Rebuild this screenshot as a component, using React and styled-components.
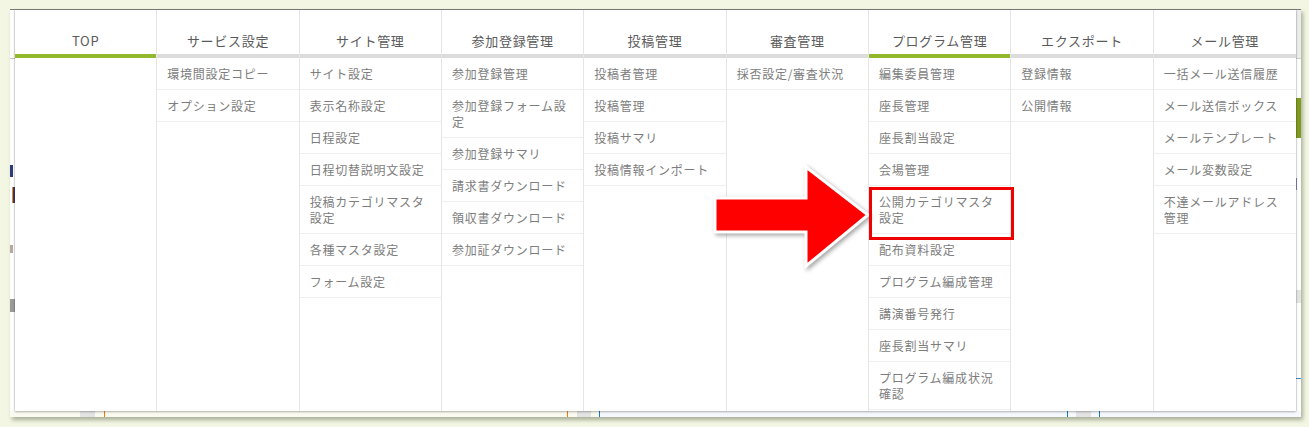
import React from "react";
import styled, { createGlobalStyle } from "styled-components";

const GlobalStyle = createGlobalStyle`
  html, body {
    margin: 0;
    padding: 0;
    background: #f2f6e3;
  }
  body {
    font-family: "Noto Sans CJK JP", "Noto Sans", sans-serif;
  }
`;

const menus = [
  { title: "TOP", active: true, items: [] },
  { title: "サービス設定", items: ["環境間設定コピー", "オプション設定"] },
  {
    title: "サイト管理",
    items: [
      "サイト設定",
      "表示名称設定",
      "日程設定",
      "日程切替説明文設定",
      "投稿カテゴリマスタ設定",
      "各種マスタ設定",
      "フォーム設定",
    ],
  },
  {
    title: "参加登録管理",
    items: [
      "参加登録管理",
      "参加登録フォーム設定",
      "参加登録サマリ",
      "請求書ダウンロード",
      "領収書ダウンロード",
      "参加証ダウンロード",
    ],
  },
  {
    title: "投稿管理",
    items: ["投稿者管理", "投稿管理", "投稿サマリ", "投稿情報インポート"],
  },
  { title: "審査管理", items: ["採否設定/審査状況"] },
  {
    title: "プログラム管理",
    active: true,
    items: [
      "編集委員管理",
      "座長管理",
      "座長割当設定",
      "会場管理",
      "公開カテゴリマスタ設定",
      "配布資料設定",
      "プログラム編成管理",
      "講演番号発行",
      "座長割当サマリ",
      "プログラム編成状況確認",
    ],
  },
  { title: "エクスポート", items: ["登録情報", "公開情報"] },
  {
    title: "メール管理",
    items: [
      "一括メール送信履歴",
      "メール送信ボックス",
      "メールテンプレート",
      "メール変数設定",
      "不達メールアドレス管理",
    ],
  },
];

const Page = styled.div`
  position: relative;
  width: 1309px;
  height: 427px;
  box-sizing: border-box;
  padding: 9px 0 0 10px;
  overflow: hidden;
`;

// the screenshot of the page behind the open menu
const Frame = styled.div`
  width: 1291px;
  height: 408px;
  box-sizing: border-box;
  border-top: 1px solid #7c7c7c;
  background: #fbfbf6;
  box-shadow: 2px 3px 4px rgba(60, 70, 40, 0.4);
  display: grid;
  grid-template-columns: 5px 1281px 1fr;
  grid-template-rows: 401px 1fr;
`;

const Gutter = styled.div`
  display: flex;
  flex-direction: column;
  align-items: ${(p) => (p.$side === "left" ? "flex-start" : "stretch")};
  background: #ffffff;
  overflow: hidden;
`;

const Mark = styled.span`
  display: block;
  flex: none;
  margin-top: ${(p) => p.$top}px;
  margin-left: ${(p) => p.$left || 0}px;
  width: ${(p) => (p.$w ? `${p.$w}px` : "auto")};
  height: ${(p) => p.$h}px;
  background: ${(p) => p.$color};
  border-left: ${(p) => (p.$edge ? `1px solid ${p.$edge}` : "none")};
`;

const BottomStrip = styled.div`
  grid-column: 1 / -1;
  display: flex;
  align-items: stretch;
  background: linear-gradient(to right, #fbfaf0 0 590px, #f5f8fc 590px);
`;

const Tick = styled.span`
  flex: none;
  margin-left: ${(p) => p.$gap}px;
  width: ${(p) => p.$w}px;
  background: ${(p) => p.$color};
`;

const Panel = styled.nav`
  background: #ffffff;
  box-shadow: 0 1px 2px rgba(0, 0, 0, 0.28), 1px 0 1px rgba(0, 0, 0, 0.08),
    -1px 0 1px rgba(0, 0, 0, 0.08);
  display: grid;
  grid-template-columns: repeat(9, 1fr);
  position: relative;
  z-index: 1;
`;

const Column = styled.div`
  display: flex;
  flex-direction: column;
  min-width: 0;
  border-right: 1px solid #e6e6e6;

  &:last-child {
    border-right: none;
  }
`;

const Header = styled.div`
  height: 48px;
  box-sizing: border-box;
  display: flex;
  align-items: flex-end;
  justify-content: center;
  padding-bottom: 4px;
  font-size: 13px;
  line-height: 18px;
  letter-spacing: 0.7px;
  color: #5a5a5a;
  border-bottom: 4px solid ${(p) => (p.$active ? "#92b82b" : "#dcdcdc")};
`;

const ItemList = styled.ul`
  list-style: none;
  margin: 0;
  padding: 0;
`;

const Item = styled.li`
  padding: 8px 8px 7px 10px;
  font-size: 12px;
  line-height: 16px;
  letter-spacing: 0.75px;
  color: #7d7d7d;
  border-bottom: 1px solid #efefef;
  word-break: break-all;
`;

const ArrowWrap = styled.svg`
  position: absolute;
  left: 700px;
  top: 155px;
  width: 185px;
  height: 125px;
  overflow: visible;
  filter: drop-shadow(2px 2px 2px rgba(0, 0, 0, 0.35));
  z-index: 2;
`;

const Highlight = styled.div`
  position: absolute;
  left: 869px;
  top: 187px;
  width: 145px;
  height: 53px;
  box-sizing: border-box;
  border: 3px solid #f00000;
  z-index: 2;
`;

const Arrow = () => (
  <ArrowWrap viewBox="0 0 185 125">
    <polygon
      points="15,43 106,43 106,12 168,60 106,111 106,77 15,77"
      fill="#ff0000"
      stroke="#ffffff"
      strokeWidth="3"
      strokeLinejoin="miter"
    />
  </ArrowWrap>
);

export default function App() {
  return (
    <>
      <GlobalStyle />
      <Page>
        <Frame>
          <Gutter $side="left">
            <Mark $top={48} $w={5} $h={1} $color="#c9c9c9" />
            <Mark $top={106} $w={3} $h={12} $color="#2d3b7a" />
            <Mark $top={10} $left={2} $w={3} $h={16} $color="#2f3c8c" $edge="#f08a00" />
            <Mark $top={42} $w={3} $h={8} $color="#b9a8a0" />
            <Mark $top={46} $w={5} $h={13} $color="#9a9a9a" />
          </Gutter>
          <Panel>
            {menus.map((menu) => (
              <Column key={menu.title}>
                <Header $active={menu.active}>{menu.title}</Header>
                <ItemList>
                  {menu.items.map((item) => (
                    <Item key={item}>{item}</Item>
                  ))}
                </ItemList>
              </Column>
            ))}
          </Panel>
          <Gutter $side="right">
            <Mark $top={0} $h={48} $color="#ececec" />
            <Mark $top={0} $h={1} $color="#cfcfcf" />
            <Mark $top={39} $h={40} $color="#7f9a1e" />
            <Mark $top={40} $w={1} $h={12} $color="#8a86b8" />
            <Mark $top={100} $h={13} $color="#e4e4e4" />
            <Mark $top={75} $h={1} $color="#3a8ed0" />
          </Gutter>
          <BottomStrip>
            <Tick $gap={70} $w={15} $color="#e3e3e3" />
            <Tick $gap={9} $w={1} $color="#f07c00" />
            <Tick $gap={462} $w={1} $color="#f07c00" />
            <Tick $gap={9} $w={14} $color="#e3e3e3" />
            <Tick $gap={8} $w={1} $color="#1a78c2" />
            <Tick $gap={467} $w={1} $color="#1a78c2" />
            <Tick $gap={8} $w={15} $color="#e3e3e3" />
            <Tick $gap={8} $w={1} $color="#1a78c2" />
          </BottomStrip>
        </Frame>
        <Arrow />
        <Highlight />
      </Page>
    </>
  );
}
